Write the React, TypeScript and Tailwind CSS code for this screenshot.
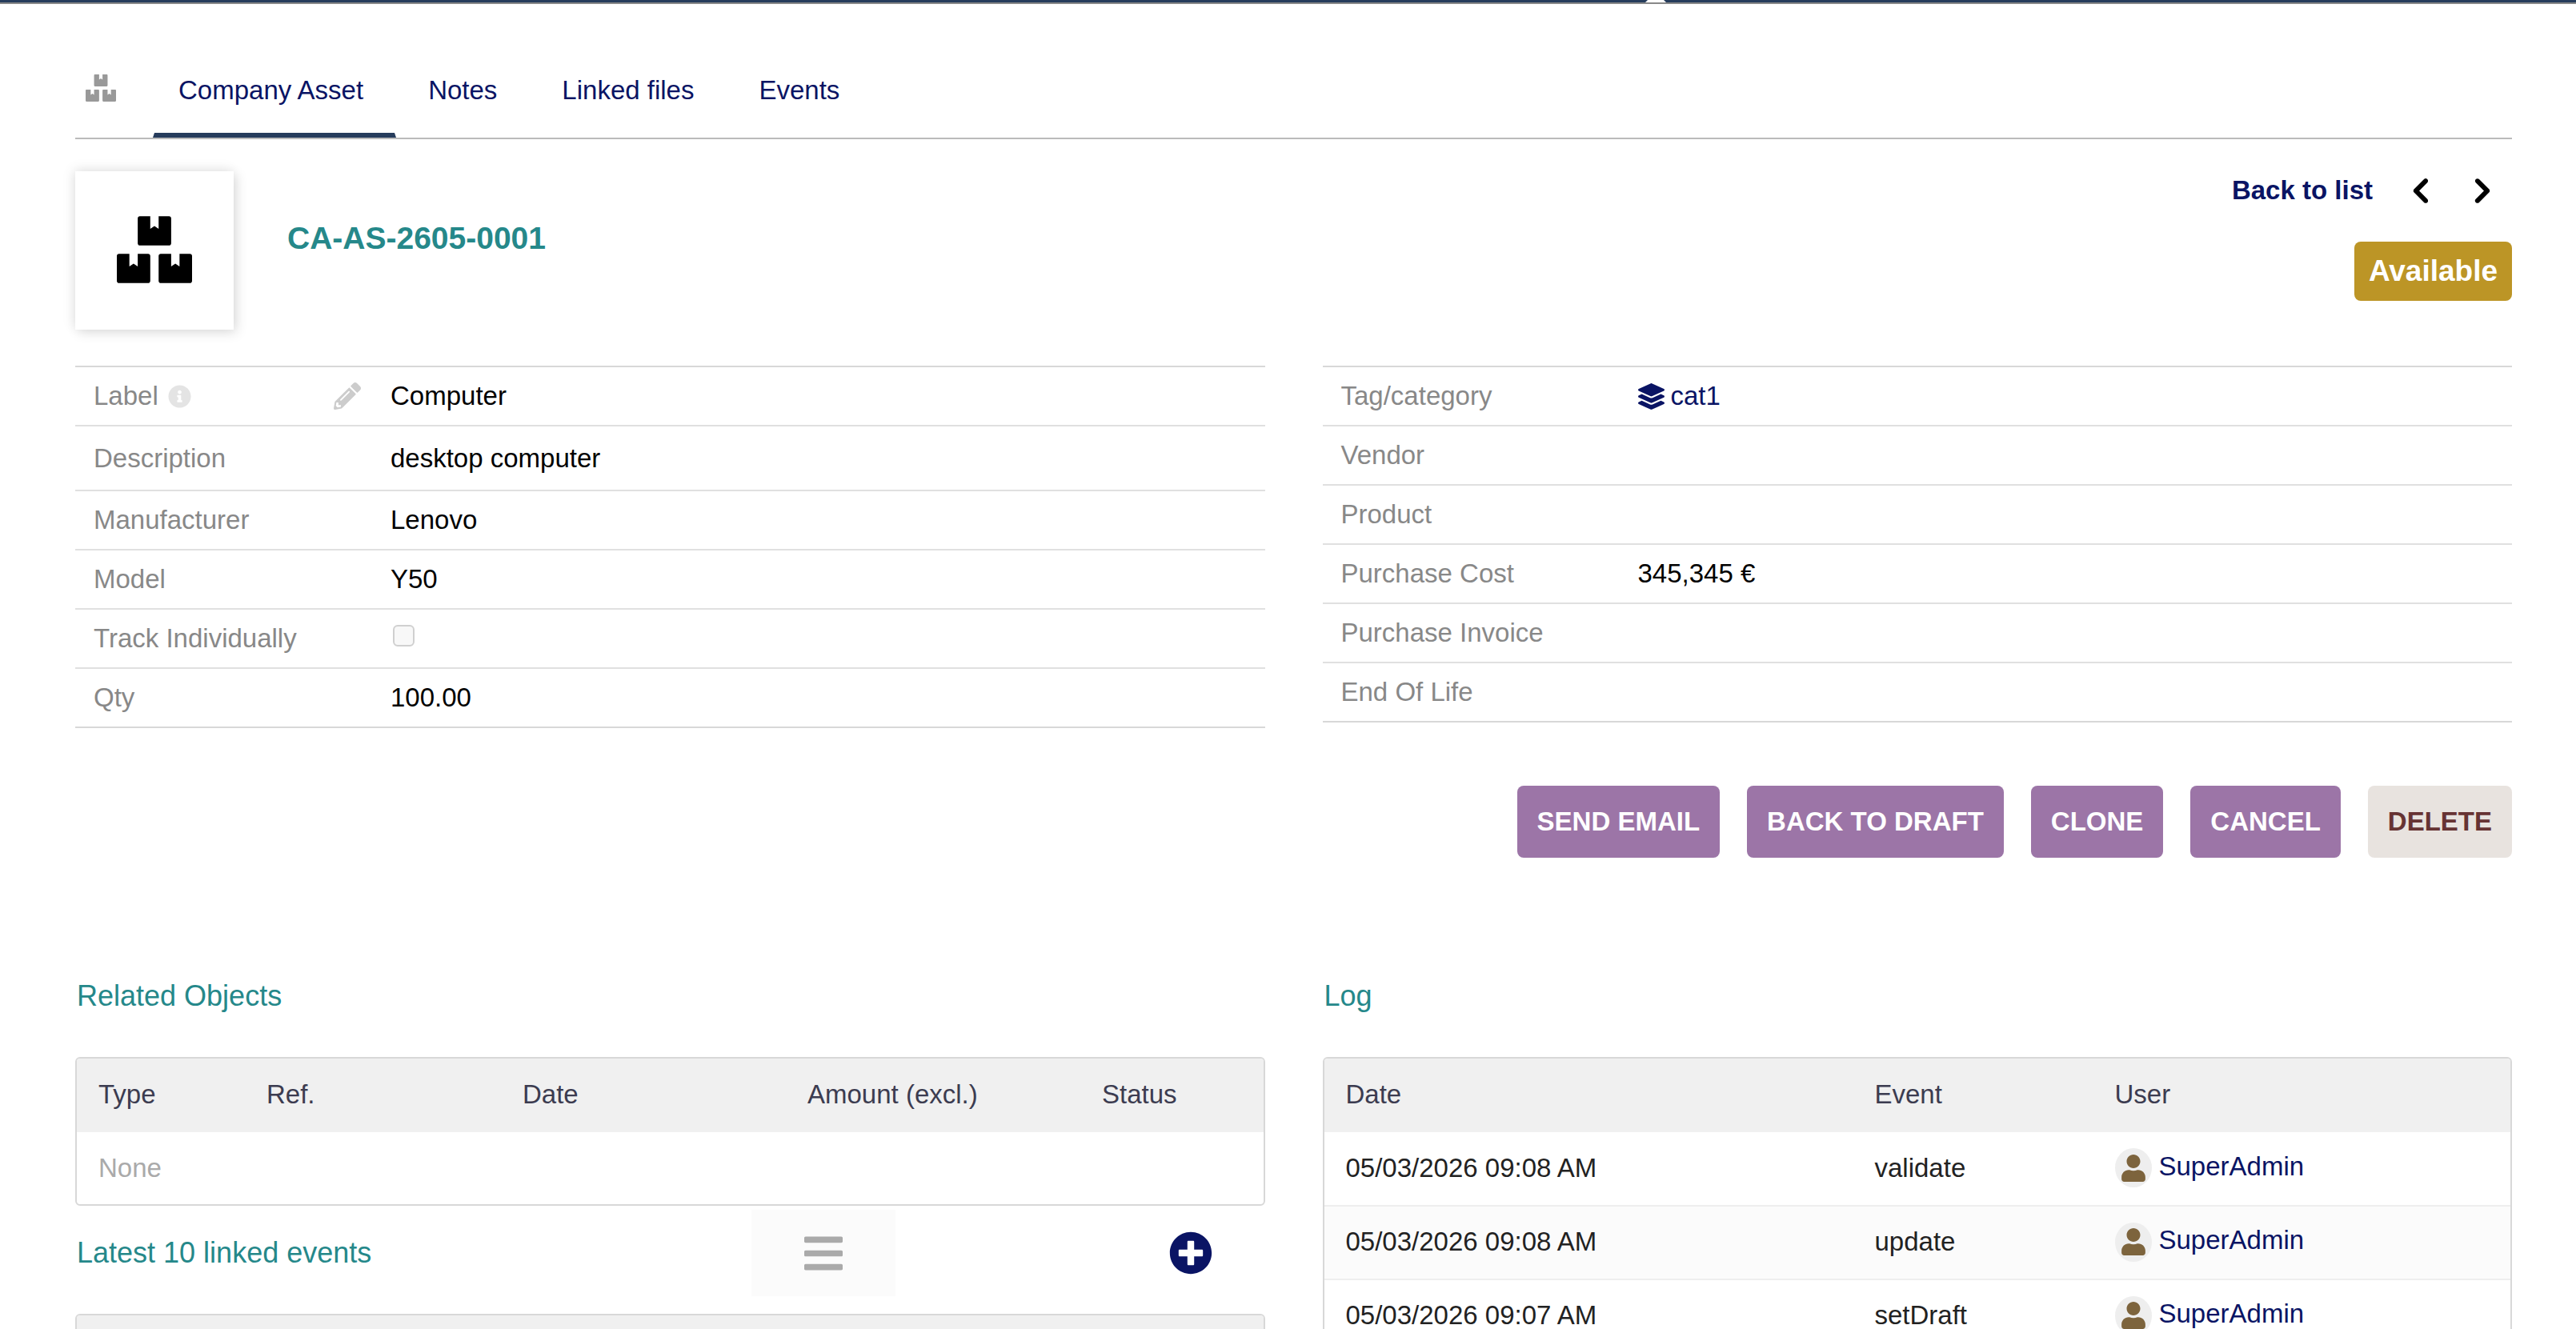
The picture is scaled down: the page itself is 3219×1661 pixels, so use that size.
import { FaBars, FaBoxes, FaInfoCircle, FaLayerGroup, FaPencilAlt, FaPlusCircle, FaUser } from 'react-icons/fa'
import { FaChevronLeft, FaChevronRight } from 'react-icons/fa6'
import type { ReactNode } from 'react'

interface FieldRowProps {
    label: ReactNode
    tall?: boolean
    action?: ReactNode
    children?: ReactNode
}

const tabs = ['Company Asset', 'Notes', 'Linked files', 'Events']

const actions = ['Send email', 'Back to draft', 'Clone', 'Cancel']

const logs = [
    { date: '05/03/2026 09:08 AM', event: 'validate', user: 'SuperAdmin' },
    { date: '05/03/2026 09:08 AM', event: 'update', user: 'SuperAdmin' },
    { date: '05/03/2026 09:07 AM', event: 'setDraft', user: 'SuperAdmin' },
]

/**
 * One line of a property sheet
 */
const FieldRow = ({ label, tall, action, children }: FieldRowProps) => (
    <tr className="border-b-2 border-[#e0e0e0] last:border-[#d8d8d8]">
        <th scope="row" className={`w-[394px] pl-[23px] pr-[37px] text-left font-normal text-[#888] ${tall ? 'h-[81px]' : 'h-[74px]'}`}>
            <div className="flex items-center justify-between">
                <span className="flex items-center gap-3">{label}</span>
                {action}
            </div>
        </th>
        <td className="text-black">{children}</td>
    </tr>
)

const FieldTable = ({ children }: { children: ReactNode }) => (
    <table className="w-full table-fixed border-collapse border-t-2 border-[#d8d8d8]">
        <tbody>{children}</tbody>
    </table>
)

const SectionTitle = ({ children }: { children: ReactNode }) => (
    <h2 className="pl-0.5 text-[36px] leading-[48px] text-[#25888a]">{children}</h2>
)

/**
 * Rounded frame around a list
 */
const ListBox = ({ children }: { children: ReactNode }) => (
    <div className="overflow-hidden rounded-md border-2 border-[#d8d8d8]">
        <table className="w-full table-fixed border-collapse text-left">{children}</table>
    </div>
)

const HeadCell = ({ className = '', children }: { className?: string; children?: ReactNode }) => (
    <th scope="col" className={`h-[92px] px-[27px] pb-0.5 font-normal text-[#3c3c50] ${className}`}>
        {children}
    </th>
)

export default function App() {
    return (
        <div className="min-h-screen overflow-hidden bg-white font-['Liberation_Sans',Arial,sans-serif] text-[33px] leading-10 text-[#222]">
            {/* bottom edge of the top menu, with the selected entry's marker */}
            <div className="h-[5px] border-b-2 border-[#888] bg-[#263c5c] pl-[64%]">
                <svg className="-ml-1 h-[3px] w-[26px]" viewBox="0 0 26 3" aria-hidden="true">
                    <path d="M3 0H23L26 3H0Z" fill="#fff" />
                </svg>
            </div>

            <main className="pl-[94px] pr-20">
                <nav className="flex items-start border-b-2 border-[#bbb] pt-22">
                    <FaBoxes className="ml-[13px] mr-[46px] h-[34px] w-[38px] text-[#999]" />
                    {tabs.map((tab, i) => (
                        <a
                            key={tab}
                            href="#"
                            className={`mr-2 border-x-2 border-b-[6px] border-transparent pb-[33px] pl-[30px] pr-[39px] text-[#0a1464] ${i === 0 ? 'border-b-[#263c5c]' : ''}`}
                        >
                            {tab}
                        </a>
                    ))}
                </nav>

                <header className="mt-10 flex items-start">
                    <div className="flex size-[198px] items-center justify-center bg-white pb-0.5 shadow-[4px_4px_14px_rgba(0,0,0,0.12),-3px_-3px_14px_rgba(0,0,0,0.08)]">
                        <FaBoxes className="h-[84px] w-[94px] text-black" />
                    </div>
                    <h1 className="ml-[67px] pt-15 text-[39px] leading-[48px] font-bold text-[#25888a]">CA-AS-2605-0001</h1>
                    <div className="ml-auto flex flex-col items-end gap-11 pt-1">
                        <div className="flex items-center pr-7 font-bold">
                            <a href="#" className="text-[#0a1464]">Back to list</a>
                            <a href="#" aria-label="Previous" className="ml-[51px] text-black">
                                <FaChevronLeft className="h-[33px] w-[22px] overflow-visible" stroke="currentColor" strokeWidth="28" />
                            </a>
                            <a href="#" aria-label="Next" className="ml-[51px] text-black">
                                <FaChevronRight className="h-[33px] w-[22px] overflow-visible" stroke="currentColor" strokeWidth="28" />
                            </a>
                        </div>
                        <span className="rounded-lg bg-[#bc9526] px-[18px] text-[37px] leading-[74px] font-bold text-white">Available</span>
                    </div>
                </header>

                <section className="mt-[45px] grid grid-cols-2 items-start gap-x-[72px]">
                    <FieldTable>
                        <FieldRow
                            label={<>Label <FaInfoCircle className="size-[29px] text-[#e4e4e4]" /></>}
                            action={<a href="#" aria-label="Edit label"><FaPencilAlt className="size-[34px] text-[#ccc]" /></a>}
                        >
                            Computer
                        </FieldRow>
                        <FieldRow label="Description" tall>desktop computer</FieldRow>
                        <FieldRow label="Manufacturer">Lenovo</FieldRow>
                        <FieldRow label="Model">Y50</FieldRow>
                        <FieldRow label={<label htmlFor="track">Track Individually</label>}>
                            <input
                                id="track"
                                type="checkbox"
                                disabled
                                className="mb-2 ml-[3px] block size-[27px] appearance-none rounded-md border-2 border-[#d0d0d0] bg-[#f8f8f8]"
                            />
                        </FieldRow>
                        <FieldRow label="Qty">100.00</FieldRow>
                    </FieldTable>
                    <FieldTable>
                        <FieldRow label="Tag/category">
                            <a href="#" className="flex items-center gap-2 text-[#0a1464]">
                                <FaLayerGroup className="size-[33px]" />
                                cat1
                            </a>
                        </FieldRow>
                        <FieldRow label="Vendor" />
                        <FieldRow label="Product" />
                        <FieldRow label="Purchase Cost">345,345 €</FieldRow>
                        <FieldRow label="Purchase Invoice" />
                        <FieldRow label="End Of Life" />
                    </FieldTable>
                </section>

                <div className="mt-[72px] flex justify-end gap-[34px]">
                    {actions.map(action => (
                        <button key={action} className="h-[90px] rounded-lg bg-[#9c75a7] px-[25px] font-bold text-white uppercase">
                            {action}
                        </button>
                    ))}
                    <button className="h-[90px] rounded-lg bg-[#e8e3df] px-[25px] font-bold text-[#633] uppercase">Delete</button>
                </div>

                <section className="mt-[149px] grid grid-cols-2 items-start gap-x-[72px]">
                    <div>
                        <SectionTitle>Related Objects</SectionTitle>
                        <div className="mt-13">
                            <ListBox>
                                <thead className="bg-[#f0f0f0]">
                                    <tr>
                                        <HeadCell className="w-[210px]">Type</HeadCell>
                                        <HeadCell className="w-[320px]">Ref.</HeadCell>
                                        <HeadCell className="w-[356px]">Date</HeadCell>
                                        <HeadCell className="w-[368px]">Amount (excl.)</HeadCell>
                                        <HeadCell>Status</HeadCell>
                                    </tr>
                                </thead>
                                <tbody>
                                    <tr>
                                        <td colSpan={5} className="h-[90px] px-[27px] text-[#aaa]">None</td>
                                    </tr>
                                </tbody>
                            </ListBox>
                        </div>

                        <div className="grid grid-cols-[1fr_180px_462px] items-center pt-[5px] pb-[22px]">
                            <SectionTitle>Latest 10 linked events</SectionTitle>
                            <button aria-label="Full list" className="flex h-[108px] items-center justify-center bg-[#fbfbfb] text-[#aaa]">
                                <FaBars className="h-[55px] w-12" />
                            </button>
                            <a href="#" aria-label="Create event" className="mr-[66px] justify-self-end text-[#0a1464]">
                                <FaPlusCircle className="size-[54px]" />
                            </a>
                        </div>
                        <ListBox>
                            <thead className="bg-[#f0f0f0]">
                                <tr>
                                    <HeadCell />
                                </tr>
                            </thead>
                        </ListBox>
                    </div>

                    <div>
                        <SectionTitle>Log</SectionTitle>
                        <div className="mt-13">
                            <ListBox>
                                <thead className="bg-[#f0f0f0]">
                                    <tr>
                                        <HeadCell className="w-[661px]">Date</HeadCell>
                                        <HeadCell className="w-[300px]">Event</HeadCell>
                                        <HeadCell>User</HeadCell>
                                    </tr>
                                </thead>
                                <tbody>
                                    {logs.map(log => (
                                        <tr key={log.event} className="border-b-2 border-[#eee] even:bg-[#fbfbfb]">
                                            <td className="h-[92px] px-[27px] pb-0.5">{log.date}</td>
                                            <td className="px-[27px] pb-0.5">{log.event}</td>
                                            <td className="px-[27px] pb-0.5">
                                                <a href="#" className="flex items-center gap-[9px] text-[#0a1464]">
                                                    <span className="flex h-[49px] w-[46px] items-center justify-center rounded-[50%] bg-[#eee] text-[#7d643d]">
                                                        <FaUser className="h-[34px] w-[30px]" />
                                                    </span>
                                                    <span className="pb-1">{log.user}</span>
                                                </a>
                                            </td>
                                        </tr>
                                    ))}
                                </tbody>
                            </ListBox>
                        </div>
                    </div>
                </section>
            </main>
        </div>
    )
}
